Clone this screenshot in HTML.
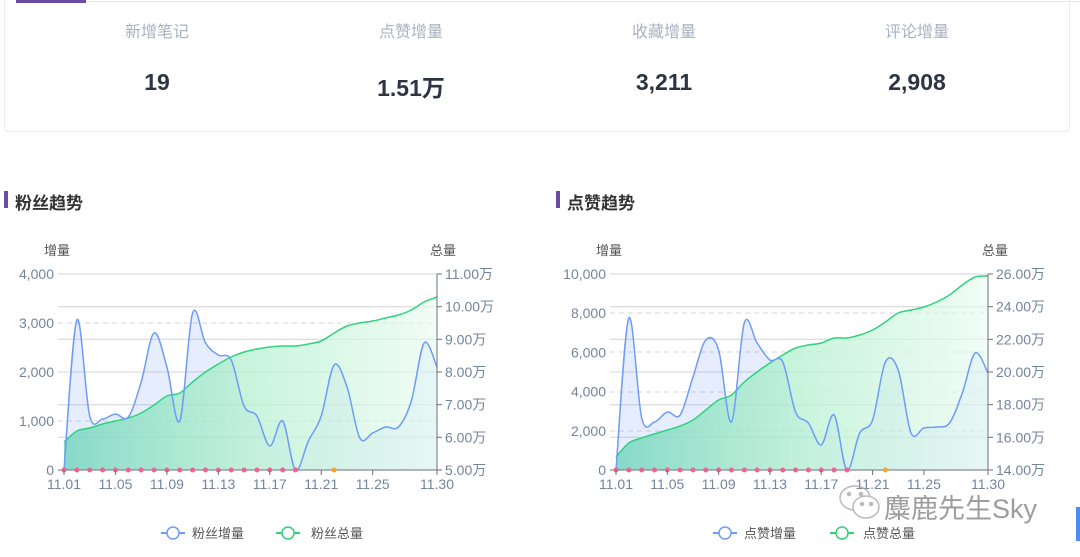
<!DOCTYPE html>
<html><head><meta charset="utf-8"><style>
html,body{margin:0;padding:0;width:1080px;height:557px;overflow:hidden;background:#fff;font-family:"Liberation Sans","Noto Sans CJK SC",sans-serif}
.card{position:absolute;left:4px;top:-6px;width:1066px;height:138px;border:1px solid #e8ebf0;border-radius:4px;box-sizing:border-box}
.tab{position:absolute;left:16px;top:0;width:70px;height:3px;background:#6b4ca5}
.topline{position:absolute;left:86px;top:1px;width:994px;height:1px;background:#e6e8ee}
.col{position:absolute;top:18px;width:200px;text-align:center}
.col .l{font-size:16px;color:#a9b1c0;height:24px}
.col .n{font-size:23px;font-weight:bold;color:#2d3542;margin-top:27px}
.ttl{position:absolute;top:189px;font-size:17px;font-weight:bold;color:#333}
.ttl i{position:absolute;left:-11px;top:2px;width:4px;height:17px;background:#6b4ca5}
svg text{font-family:"Liberation Sans","Noto Sans CJK SC",sans-serif}
</style></head><body>
<div class="card"></div>
<div class="topline"></div><div class="tab"></div>
<div class="col" style="left:57px"><div class="l">新增笔记</div><div class="n">19</div></div>
<div class="col" style="left:311px"><div class="l">点赞增量</div><div class="n">1.51万</div></div>
<div class="col" style="left:564px"><div class="l">收藏增量</div><div class="n">3,211</div></div>
<div class="col" style="left:817px"><div class="l">评论增量</div><div class="n">2,908</div></div>
<div class="ttl" style="left:15px"><i></i>粉丝趋势</div>
<div class="ttl" style="left:567px"><i></i>点赞趋势</div>
<svg id="s" width="1080" height="557" style="position:absolute;left:0;top:0">
<defs>
<linearGradient id="gg" x1="0" x2="1" y1="0" y2="0"><stop offset="0" stop-color="#3ec4a6" stop-opacity="0.6"/><stop offset="0.5" stop-color="#4ddc8c" stop-opacity="0.3"/><stop offset="1" stop-color="#4ddc8c" stop-opacity="0.08"/></linearGradient>
</defs>
<g id="c1"></g><g id="c2"></g>
<g font-size="13" fill="#555">
<text x="44" y="255">增量</text><text x="430" y="255">总量</text>
<text x="596" y="255">增量</text><text x="982" y="255">总量</text>
</g>
<g font-size="13" fill="#555">
<line x1="161" y1="533" x2="185" y2="533" stroke="#6e9cf7" stroke-width="2"/><circle cx="173" cy="533" r="6" fill="#fff" stroke="#6e9cf7" stroke-width="1.5"/><text x="192" y="538">粉丝增量</text>
<line x1="276" y1="533" x2="300" y2="533" stroke="#33d17a" stroke-width="2"/><circle cx="288" cy="533" r="6" fill="#fff" stroke="#33d17a" stroke-width="1.5"/><text x="311" y="538">粉丝总量</text>
<line x1="713" y1="533" x2="737" y2="533" stroke="#6e9cf7" stroke-width="2"/><circle cx="725" cy="533" r="6" fill="#fff" stroke="#6e9cf7" stroke-width="1.5"/><text x="744" y="538">点赞增量</text>
<line x1="830" y1="533" x2="854" y2="533" stroke="#33d17a" stroke-width="2"/><circle cx="842" cy="533" r="6" fill="#fff" stroke="#33d17a" stroke-width="1.5"/><text x="863" y="538">点赞总量</text>
</g>
<g fill="none" stroke="#aaa" stroke-width="1.5" opacity="0.8">
<ellipse cx="855" cy="498" rx="15" ry="12"/><ellipse cx="866" cy="507" rx="13" ry="11" fill="#fff"/>
<circle cx="849" cy="494" r="1.5" fill="#aaa"/><circle cx="861" cy="494" r="1.5" fill="#aaa"/><circle cx="862" cy="504" r="1.5" fill="#aaa"/><circle cx="871" cy="504" r="1.5" fill="#aaa"/>
</g>
<text x="884" y="518" font-size="27" fill="#8c8c8c" opacity="0.85">麋鹿先生Sky</text>
<rect x="1076" y="507" width="4" height="34" fill="#4b8df8"/>
</svg>
<script>
function cr(p){let d='M'+p[0][0]+','+p[0][1];for(let i=0;i<p.length-1;i++){const a=p[i-1]||p[i],b=p[i],c=p[i+1],e=p[i+2]||c;const t=6;d+=' C'+(b[0]+(c[0]-a[0])/t).toFixed(1)+','+(b[1]+(c[1]-a[1])/t).toFixed(1)+' '+(c[0]-(e[0]-b[0])/t).toFixed(1)+','+(c[1]-(e[1]-b[1])/t).toFixed(1)+' '+c[0].toFixed(1)+','+c[1];}return d;}
function chart(g,x0,x1,blue,green,ll,rl,dashY,orange){
 let h='';const step=(x1-x0)/29;
 const solid=[274,306.7,339.3,372,404.7,437.3];
 solid.forEach(y=>h+=`<line x1="${x0-6}" x2="${x1}" y1="${y}" y2="${y}" stroke="#d4d4d4"/>`);
 dashY.forEach(y=>h+=`<line x1="${x0-6}" x2="${x1}" y1="${y}" y2="${y}" stroke="#d4d4d4" stroke-dasharray="5,4"/>`);
 const bp=blue.map((v,i)=>[x0+i*step,v]),gp=green.map((v,i)=>[x0+i*step,v]);
 h+=`<path d="${cr(bp)} L${x1},470 L${x0},470Z" fill="#6e9cf7" fill-opacity="0.18"/>`;
 h+=`<path d="${cr(gp)} L${x1},470 L${x0},470Z" fill="#fff" fill-opacity="0.6"/>`;
 h+=`<path d="${cr(gp)} L${x1},470 L${x0},470Z" fill="url(#gg)"/>`;
 h+=`<path d="${cr(gp)}" fill="none" stroke="#2fd37e" stroke-width="1.5"/>`;
 h+=`<path d="${cr(bp)}" fill="none" stroke="#6e9cf7" stroke-width="1.5"/>`;
 h+=`<line x1="${x0-6}" x2="${x1}" y1="470" y2="470" stroke="#6e7079"/>`;
 h+=`<line x1="${x1}" x2="${x1}" y1="274" y2="470" stroke="#6e7079"/>`;
 solid.concat([470]).forEach(y=>h+=`<line x1="${x1}" x2="${x1+5}" y1="${y}" y2="${y}" stroke="#6e7079"/>`);
 for(let i=0;i<=18;i++)h+=`<circle cx="${x0+i*step}" cy="470" r="2.5" fill="#f06292"/>`;
 h+=`<circle cx="${x0+orange*step}" cy="470" r="2.5" fill="#f5a623"/>`;
 [0,4,8,12,16,20,24,29].forEach(i=>{const lab=i==29?'11.30':'11.'+String(i+1).padStart(2,'0');h+=`<line x1="${x0+i*step}" x2="${x0+i*step}" y1="470" y2="475" stroke="#6e7079"/><text x="${x0+i*step}" y="489" text-anchor="middle" font-size="14" fill="#74849c">${lab}</text>`;});
 ll.forEach((t,i)=>h+=`<text x="${x0-10}" y="${470-i*(196/(ll.length-1))+5}" text-anchor="end" font-size="14" fill="#74849c">${t}</text>`);
 rl.forEach((t,i)=>h+=`<text x="${x1+8}" y="${470-i*32.67+5}" font-size="14" fill="#74849c">${t}</text>`);
 document.getElementById(g).innerHTML=h;
}
chart('c1',64,437,
[470,320,416,419,414,417,382,333,367,421,313,343,355,360,406,416,446,421,470,441,416,365,387,438,433,427,427,401,343,367],
[442,431,428,424,421,418,413,405,396,393,382,372,364,357,352,349,347,346,346,344,341,333,326,323,321,318,315,310,302,297],
['0','1,000','2,000','3,000','4,000'],['5.00万','6.00万','7.00万','8.00万','9.00万','10.00万','11.00万'],[323,421],21);
chart('c2',616,988,
[470,318,418,422,412,415,377,340,350,422,323,343,360,362,412,423,445,415,470,433,420,362,370,433,428,427,423,393,353,373],
[457,443,438,434,430,426,420,410,400,395,382,372,363,355,348,345,343,338,338,335,330,322,313,310,307,302,295,285,277,276],
['0','2,000','4,000','6,000','8,000','10,000'],['14.00万','16.00万','18.00万','20.00万','22.00万','24.00万','26.00万'],[313,352,392,431],21);
</script>
</body></html>
